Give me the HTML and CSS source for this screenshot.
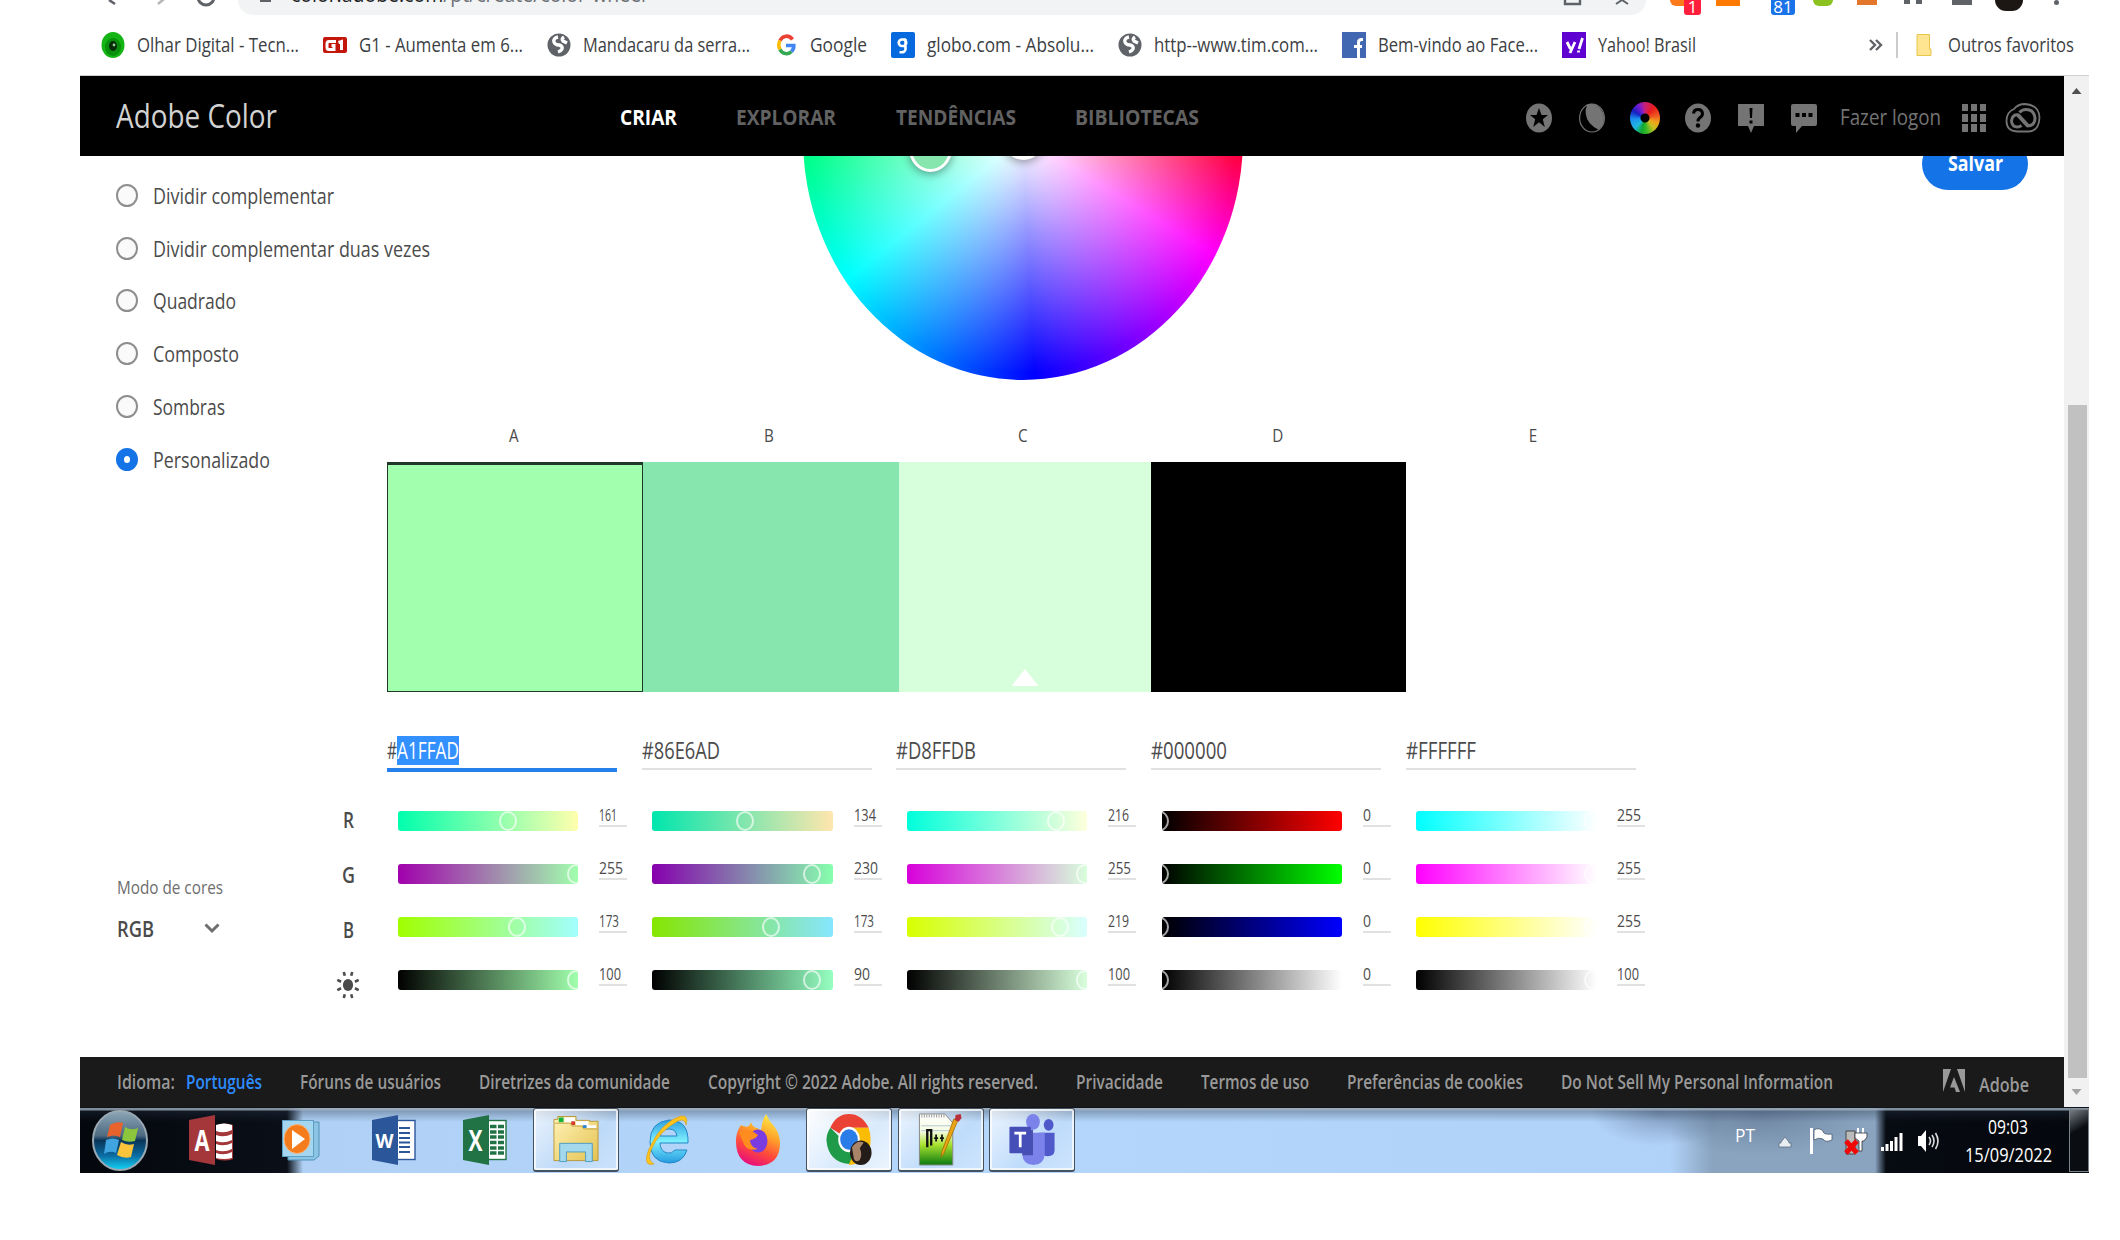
FILE: index.html
```html
<!DOCTYPE html>
<html lang="pt">
<head>
<meta charset="utf-8">
<title>Adobe Color</title>
<link rel="stylesheet" href="styles.css">
</head>
<body>
<svg class="defs" aria-hidden="true">
  <defs>
    <linearGradient id="gOrb" x2="0" y2="1"><stop offset="0" stop-color="#8ea7b8"/><stop offset=".42" stop-color="#4d6a80"/><stop offset=".5" stop-color="#0a3558"/><stop offset=".75" stop-color="#0b6aa0"/><stop offset="1" stop-color="#12d6f8"/></linearGradient>
    <linearGradient id="gFox" x1=".8" y1="0" x2=".4" y2="1"><stop offset="0" stop-color="#fff04a"/><stop offset=".4" stop-color="#ffa12a"/><stop offset=".7" stop-color="#ff4a3a"/><stop offset="1" stop-color="#e8107a"/></linearGradient>
    <linearGradient id="gIe" x2="0" y2="1"><stop offset="0" stop-color="#2f9fe0"/><stop offset=".5" stop-color="#7ff0ff"/><stop offset="1" stop-color="#249be0"/></linearGradient>
    <linearGradient id="gNpp" x2="0" y2="1"><stop offset="0" stop-color="#fff"/><stop offset=".35" stop-color="#f4fbe0"/><stop offset=".6" stop-color="#a9e22e"/><stop offset="1" stop-color="#0a7a10"/></linearGradient>
    <linearGradient id="gFold" x2="1" y2="1"><stop offset="0" stop-color="#fff3b8"/><stop offset="1" stop-color="#e4c250"/></linearGradient>
    <symbol id="globe" viewBox="0 0 24 26"><ellipse cx="12" cy="13" rx="11.5" ry="11.5" fill="#5f6368"/><path d="M11 5q-5 1-4 5 1 3 5 3 4 1 3 4-1 2-4 3M17 5q-3 2-1 4l4 2" fill="none" stroke="#fff" stroke-width="3.400"/></symbol>
  </defs>
</svg>

<div class="window">
  <div class="toolbar">
    <svg class="tb-nav" viewBox="0 0 110 6"><path d="M1 0l6 4" fill="none" stroke="#5f6368" stroke-width="2.600"/><path d="M50 4l6-5" stroke="#b5b7ba" stroke-width="2.600"/><path d="M90-3a8 8 0 0 0 16 0" fill="none" stroke="#5f6368" stroke-width="3"/></svg>
    <div class="omnibox">
      <i class="lock"></i>
      <span class="url"><span class="fit" style="--w:355px"><b>color.adobe.com</b>/pt/create/color-wheel</span></span>
      <svg class="omni-icons" viewBox="0 0 66 6"><path d="M1 0v4h15V0" fill="none" stroke="#5f6368" stroke-width="2.400"/><path d="M52 4l6-4 6 4" fill="none" stroke="#5f6368" stroke-width="2"/></svg>
    </div>
    <div class="exts">
      <span class="ext orange"><em class="red">1</em></span>
      <span class="ext box"></span>
      <span class="ext dark"><em class="blue">81</em></span>
      <span class="ext green"></span>
      <span class="ext fox"></span>
      <span class="ext puzzle"></span>
      <span class="ext list"></span>
      <span class="ext face"></span>
      <span class="ext dot"></span>
    </div>
  </div>

  <nav class="bookmarks">
    <a><svg viewBox="0 0 24 26"><ellipse cx="12" cy="13" rx="11.5" ry="13" fill="#14b414"/><ellipse cx="12" cy="15" rx="8" ry="9" fill="#08900c"/><ellipse cx="12" cy="14" rx="4" ry="5" fill="#032c05"/><circle cx="13" cy="13" r="1.4" fill="#9c9"/></svg><span class="fit" style="--w:162px">Olhar Digital - Tecn...</span></a>
    <a><svg viewBox="0 0 24 26"><rect y="5" width="24" height="16" rx="2" fill="#c4170c"/><path d="M13 9.500H6q-2 0-2 2v4q0 2 2 2h5v-4H8.500M15.500 10.500l3-1V18" fill="none" stroke="#fff" stroke-width="3"/></svg><span class="fit" style="--w:164px">G1 - Aumenta em 6...</span></a>
    <a><svg><use href="#globe"/></svg><span class="fit" style="--w:167px">Mandacaru da serra...</span></a>
    <a><svg viewBox="0 0 24 26"><g fill="none" stroke-width="3.600"><path d="M18.500 7.500A7.500 8.500 0 0 0 6 8.500" stroke="#ea4335"/><path d="M6 8.500a8.500 9 0 0 0 0 9" stroke="#fbbc05"/><path d="M6 17.500a7.500 8.500 0 0 0 11.500 2" stroke="#34a853"/><path d="M17.500 19.500q2.500-2.500 2.300-6H12" stroke="#4285f4"/></g></svg><span class="fit" style="--w:57px">Google</span></a>
    <a><svg viewBox="0 0 24 26"><rect width="24" height="26" rx="2" fill="#0669de"/><path d="M15 7.500h-4a3 3 0 0 0 0 6.500h1a3 3 0 0 0 0-6.500M14.500 7v10q0 4-6 3" fill="none" stroke="#fff" stroke-width="2.600"/></svg><span class="fit" style="--w:167px">globo.com - Absolu...</span></a>
    <a><svg><use href="#globe"/></svg><span class="fit" style="--w:164px">http--www.tim.com...</span></a>
    <a><svg viewBox="0 0 24 26"><rect width="24" height="26" fill="#4267b2"/><path d="M16.500 26V14M21 7.500h-1.500q-3 0-3 3V14M12 14.500h8" fill="none" stroke="#fff" stroke-width="3"/></svg><span class="fit" style="--w:160px">Bem-vindo ao Face...</span></a>
    <a><svg viewBox="0 0 24 26"><rect width="24" height="26" fill="#5f01d1"/><path d="M5 10l3.500 7M13 10L8 21M17 17l3.500-11M16.500 18.500v2" fill="none" stroke="#fff" stroke-width="2.800"/></svg><span class="fit" style="--w:98px">Yahoo! Brasil</span></a>
    <span class="more"><svg viewBox="0 0 14 12"><path d="M1 1l5 5-5 5M7 1l5 5-5 5" fill="none" stroke="#5f6368" stroke-width="2.400"/></svg></span>
    <a class="others"><svg viewBox="0 0 24 26"><path d="M5 2.500h12.500V17h1.500v6.500H5z" fill="#ffe591" stroke="#e8c64c"/></svg><span class="fit" style="--w:126px">Outros favoritos</span></a>
  </nav>

  <div class="view">
    <div class="page">
      <header class="top">
        <span class="brand"><span class="fit" style="--w:161px">Adobe Color</span></span>
        <nav class="menu">
          <a class="on"><span class="fit" style="--w:57px">CRIAR</span></a>
          <a><span class="fit" style="--w:100px">EXPLORAR</span></a>
          <a><span class="fit" style="--w:120px">TENDÊNCIAS</span></a>
          <a><span class="fit" style="--w:124px">BIBLIOTECAS</span></a>
        </nav>
        <div class="tools">
          <svg viewBox="0 0 26 30"><ellipse cx="13" cy="15" rx="13" ry="14.500" fill="#747474"/><path d="M13 5l2.500 7H22l-5.200 4.300L18.800 24 13 19.300 7.200 24l2-7.700L4 12h6.500z" fill="#000"/></svg>
          <svg viewBox="0 0 26 30"><ellipse cx="13" cy="15" rx="12.400" ry="14" fill="#000" stroke="#747474" stroke-width="1.200"/><path d="M6 2.500Q14-2 21 5q7 9 2 18l-3 4Q8 21 7 12 6 6 8 3z" fill="#747474"/></svg>
          <span class="mini-wheel"></span>
          <svg viewBox="0 0 26 30"><ellipse cx="13" cy="15" rx="13" ry="14.500" fill="#747474"/><path d="M8.500 10.500q.5-4 4.500-4t4.500 4q0 2.500-2.500 4-2 1.500-2 4" fill="none" stroke="#000" stroke-width="3"/><circle cx="13" cy="22.500" r="2.200"/></svg>
          <svg viewBox="0 0 26 30"><path d="M0 1h26v22H16l-3 7-3-7H0z" fill="#747474"/><path d="M11.500 5h3l-.5 10h-2zM11.500 17.500h3v3h-3z"/></svg>
          <svg viewBox="0 0 26 30"><path d="M2 1h22q2 0 2 2v18q0 2-2 2H11l-6 7v-7H2q-2 0-2-2V3q0-2 2-2z" fill="#747474"/><path d="M4.500 10h4v4h-4zM11 10h4v4h-4zM17.500 10h4v4h-4z"/></svg>
          <span class="login"><span class="fit" style="--w:101px">Fazer logon</span></span>
          <svg class="grid9" viewBox="0 0 24 28"><path d="M0 0h6v7H0zM9 0h6v7H9zM18 0h6v7h-6zM0 10h6v8H0zM9 10h6v8H9zM18 10h6v8h-6zM0 20h6v8H0zM9 20h6v8H9zM18 20h6v8h-6z" fill="#747474"/></svg>
          <svg class="cc" viewBox="0 0 36 30"><g fill="none" stroke="#747474"><path d="M12 28.500Q1.500 28 1.500 18 1.500 9 9 6q4-5 11-5 14 1 14.500 13.500Q34 28 24 28.500z" stroke-width="1.800"/><path d="M22 23q8 0 8-8-1-8.500-9-8.500-4 0-6.500 3M14 12q-7-1-7.500 6 .5 6 6 6 2 0 4-1.500" stroke-width="3"/><path d="M13 12l10 11" stroke-width="4"/></g></svg>
        </div>
      </header>

      <main class="main">
        <aside class="side">
          <ul class="rules">
            <li><i></i><span class="fit" style="--w:181px">Dividir complementar</span></li>
            <li><i></i><span class="fit" style="--w:277px">Dividir complementar duas vezes</span></li>
            <li><i></i><span class="fit" style="--w:83px">Quadrado</span></li>
            <li><i></i><span class="fit" style="--w:86px">Composto</span></li>
            <li><i></i><span class="fit" style="--w:72px">Sombras</span></li>
            <li class="sel"><i></i><span class="fit" style="--w:117px">Personalizado</span></li>
          </ul>
          <div class="mode">
            <div class="mode-label"><span class="fit" style="--w:106px">Modo de cores</span></div>
            <div class="mode-value"><span class="fit" style="--w:37px">RGB</span><svg viewBox="0 0 16 10"><path d="M1.500 1.500L8 8l6.500-6.500" fill="none" stroke="#6e6e6e" stroke-width="3"/></svg></div>
          </div>
        </aside>

        <section class="work">
          <div class="wheel-box">
            <div class="wheel"></div>
            <span class="pin pin-b"></span>
            <span class="pin pin-c"></span>
          </div>
          <div class="cols letters"><span>A</span><span>B</span><span>C</span><span>D</span><span>E</span></div>
          <div class="swatches">
            <div class="sw sw-a"></div><div class="sw sw-b"></div><div class="sw sw-c"><i></i></div><div class="sw sw-d"></div><div class="sw sw-e"></div>
          </div>
          <div class="cols hexes">
            <div class="hex active"><span class="fit" style="--w:10px">#</span><mark><span class="fit" style="--w:62px">A1FFAD</span></mark></div>
            <div class="hex"><span class="fit" style="--w:78px">#86E6AD</span></div>
            <div class="hex"><span class="fit" style="--w:80px">#D8FFDB</span></div>
            <div class="hex"><span class="fit" style="--w:76px">#000000</span></div>
            <div class="hex"><span class="fit" style="--w:70px">#FFFFFF</span></div>
          </div>
          <div class="mixer">
            <div class="channels">
              <span><b class="fit" style="--w:11px">R</b></span><span><b class="fit" style="--w:13px">G</b></span><span><b class="fit" style="--w:11px">B</b></span>
              <span><svg viewBox="0 0 24 28"><ellipse cx="12" cy="14" rx="5.500" ry="6.500" fill="#4b4b4b"/><path d="M8.500 4L7.500 0M15.500 4L16.500 0M8.500 24L7.500 28M15.500 24l1 4M4.500 10.500L.5 8.500M19.500 10.500l4-2M4.500 17.500l-4 2M19.500 17.500l4 2" stroke="#4b4b4b" stroke-width="2.800"/></svg></span>
            </div>
            <div class="sliders">
              <div class="s" style="--g:#00ffad,#ffffad"><div class="bar"><i style="left:110px"></i></div><div class="val"><span class="fit" style="--w:18px">161</span></div></div>
              <div class="s" style="--g:#00e6ad,#ffe6ad"><div class="bar"><i style="left:93px"></i></div><div class="val"><span class="fit" style="--w:22px">134</span></div></div>
              <div class="s" style="--g:#00ffdb,#ffffdb"><div class="bar"><i style="left:149px"></i></div><div class="val"><span class="fit" style="--w:21px">216</span></div></div>
              <div class="s" style="--g:#000,#f00"><div class="bar"><i style="left:-2px"></i></div><div class="val"><span class="fit" style="--w:8px">0</span></div></div>
              <div class="s" style="--g:#0ff,#fff"><div class="bar"><i style="left:177px"></i></div><div class="val"><span class="fit" style="--w:24px">255</span></div></div>

              <div class="s" style="--g:#a100ad,#a1ffad"><div class="bar"><i style="left:178px"></i></div><div class="val"><span class="fit" style="--w:24px">255</span></div></div>
              <div class="s" style="--g:#8600ad,#86ffad"><div class="bar"><i style="left:160px"></i></div><div class="val"><span class="fit" style="--w:24px">230</span></div></div>
              <div class="s" style="--g:#d800db,#d8ffdb"><div class="bar"><i style="left:178px"></i></div><div class="val"><span class="fit" style="--w:23px">255</span></div></div>
              <div class="s" style="--g:#000,#0f0"><div class="bar"><i style="left:-2px"></i></div><div class="val"><span class="fit" style="--w:8px">0</span></div></div>
              <div class="s" style="--g:#f0f,#fff"><div class="bar"><i style="left:177px"></i></div><div class="val"><span class="fit" style="--w:24px">255</span></div></div>

              <div class="s" style="--g:#a1ff00,#a1ffff"><div class="bar"><i style="left:119px"></i></div><div class="val"><span class="fit" style="--w:20px">173</span></div></div>
              <div class="s" style="--g:#86e600,#86e6ff"><div class="bar"><i style="left:119px"></i></div><div class="val"><span class="fit" style="--w:20px">173</span></div></div>
              <div class="s" style="--g:#d8ff00,#d8ffff"><div class="bar"><i style="left:153px"></i></div><div class="val"><span class="fit" style="--w:21px">219</span></div></div>
              <div class="s" style="--g:#000,#00f"><div class="bar"><i style="left:-2px"></i></div><div class="val"><span class="fit" style="--w:8px">0</span></div></div>
              <div class="s" style="--g:#ff0,#fff"><div class="bar"><i style="left:177px"></i></div><div class="val"><span class="fit" style="--w:24px">255</span></div></div>

              <div class="s" style="--g:#000,#a1ffad"><div class="bar"><i style="left:178px"></i></div><div class="val"><span class="fit" style="--w:22px">100</span></div></div>
              <div class="s" style="--g:#000,#95ffc0"><div class="bar"><i style="left:160px"></i></div><div class="val"><span class="fit" style="--w:16px">90</span></div></div>
              <div class="s" style="--g:#000,#d8ffdb"><div class="bar"><i style="left:178px"></i></div><div class="val"><span class="fit" style="--w:22px">100</span></div></div>
              <div class="s" style="--g:#000,#fff"><div class="bar"><i style="left:-2px"></i></div><div class="val"><span class="fit" style="--w:8px">0</span></div></div>
              <div class="s" style="--g:#000,#fff"><div class="bar"><i style="left:177px"></i></div><div class="val"><span class="fit" style="--w:22px">100</span></div></div>
            </div>
          </div>
        </section>

        <div class="save"><button><span class="fit" style="--w:55px">Salvar</span></button></div>
      </main>

      <footer class="foot">
        <span class="fit" style="--w:58px">Idioma:</span><a class="lang"><span class="fit" style="--w:76px">Português</span></a>
        <span class="fit" style="--w:141px">Fóruns de usuários</span>
        <span class="fit" style="--w:191px">Diretrizes da comunidade</span>
        <span class="fit" style="--w:330px">Copyright © 2022 Adobe. All rights reserved.</span>
        <span class="fit" style="--w:87px">Privacidade</span>
        <span class="fit" style="--w:108px">Termos de uso</span>
        <span class="fit" style="--w:176px">Preferências de cookies</span>
        <span class="fit" style="--w:272px">Do Not Sell My Personal Information</span>
        <span class="adobe"><svg viewBox="0 0 22 23"><path d="M0 0h8L0 23zM14 0h8v23zM11 8l6 15h-4l-1.500-4.500H7z" fill="#999"/></svg><span class="fit" style="--w:50px">Adobe</span></span>
      </footer>
    </div>
    <div class="scroll"><i class="up"></i><i class="thumb"></i><i class="down"></i></div>
  </div>

  <div class="taskbar">
    <svg class="orb" viewBox="0 0 56 61"><ellipse cx="28" cy="30.500" rx="27" ry="29.500" fill="url(#gOrb)" stroke="#9aa8b4" stroke-width="2"/><path d="M18 15q6-4 13-2l-3 14q-6-3-13 0z" fill="#e8622c"/><path d="M33 17q6 4 13 1l-3 13q-7 2-13-1z" fill="#8cc63c"/><path d="M14 30q7-3 13 0l-3 13q-6-3-12 1z" fill="#3fa4e0"/><path d="M29 32q6 4 13 2l-3 13q-7 2-14-2z" fill="#fcc43a"/></svg>
    <svg class="ic office" viewBox="0 0 44 50"><path d="M0 5l26-5v50L0 45z" fill="#a4373a"/><path d="M27 10q9-3 17 0v34q-8 3-17 0z" fill="#a4373a"/><path d="M27 10q8-3 16 0v5q-8 4-16 1zM27 20q8 3 16-1v6q-8 4-16 1zM27 29q8 3 16-1v6q-8 4-16 1zM27 38q8 3 16-1v6q-8 2-16 0z" fill="#fff"/><text x="13" y="36" textLength="15" lengthAdjust="spacingAndGlyphs">A</text></svg>
    <svg class="ic wmp" viewBox="0 0 40 40"><path d="M6 2h31v34l-5 4H6z" fill="#8cc4e4" stroke="#4f92b8"/><rect x=".5" y=".5" width="31" height="36" fill="#a5d6f0" stroke="#5c9fc6"/><ellipse cx="15" cy="19" rx="13" ry="14.500" fill="#f57c1c" stroke="#f7b47a"/><path d="M10 10l13 9-13 10z" fill="#fff"/></svg>
    <svg class="ic office" viewBox="0 0 44 50"><rect x="24" y="5.500" width="19" height="39" fill="#fff" stroke="#2b579a" stroke-width="1.400"/><path d="M27 13h11M27 18h11M27 23h11M27 27.500h11M27 32h11M27 37h11" stroke="#2b579a" stroke-width="2"/><path d="M0 5l26-5v50L0 45z" fill="#2b579a"/><text x="12.500" y="33" class="w" textLength="18" lengthAdjust="spacingAndGlyphs">W</text></svg>
    <svg class="ic office" viewBox="0 0 44 50"><rect x="24" y="5.500" width="19" height="39" fill="#fff" stroke="#217346" stroke-width="1.400"/><path d="M27 11.500h14M27 17h14M27 22h14M27 27.500h14M27 33h14M27 38h14" stroke="#217346" stroke-width="3.400" stroke-dasharray="6.500 1.500"/><path d="M0 5l26-5v50L0 45z" fill="#217346"/><text x="12.500" y="36" textLength="14" lengthAdjust="spacingAndGlyphs">X</text></svg>
    <span class="tbtn"><svg viewBox="0 0 48 48"><path d="M1 46V3h4V0h19v4h14v1h9v41z" fill="url(#gFold)" stroke="#b8983c"/><path d="M6 1h5v5H6z" fill="#14b43c"/><path d="M12 1h11v5H12zM24 5h13v4H24zM34 9h11v3H34z" fill="#fff"/><path d="M19 5h4v4h-4z" fill="#d43c2c"/><path d="M31 9h4v3h-4z" fill="#2c84d4"/><path d="M2 7h16l2 3h10l2 3h14" fill="none" stroke="#c4a44a"/><path d="M7 47V28h34v19h-7V37H14v10z" fill="#a4d8ec" stroke="#4c9cc0"/></svg></span>
    <svg class="ic ie" viewBox="0 0 46 52"><path d="M15 29h28Q44 6 24 6 5 8 5 28t19 21q14 0 18-13H30q-3 4-8 3-7-2-7-10zm0-7q2-7 9-7t8 7z" fill="url(#gIe)" stroke="#2386c8"/><path d="M9 50Q-3 53 4 35 16 8 36 2q8-1 5 9-1-7-8-4Q14 17 6 36q-4 11 3 14z" fill="#fcc41c" stroke="#d89a10" stroke-width=".6"/></svg>
    <svg class="ic ff" viewBox="0 0 44 52"><path d="M5 11q5 3 8 1l2-4q1 5 6 6l4 2q1-10 5-16 3 7 8 12 6 8 6 17 0 22-22 23Q0 51 0 27 0 18 5 11z" fill="url(#gFox)"/><ellipse cx="22" cy="27" rx="9.500" ry="11.500" fill="#7a3ce0"/><path d="M3 18q5-4 13-1l6 4q-2 4-8 5 0 7 8 9-12 3-15-7z" fill="#ff8c1e"/></svg>
    <span class="tbtn hot"><svg viewBox="0 0 46 52"><path d="M23 26L4 14Q10 0 23 0t20 14H23z" fill="#ea4335"/><path d="M43 14H23v12l0 26Q45 50 45 26q0-6-2-12z" fill="#fbbc05"/><path d="M4 14Q0 20 0 27q2 22 23 24l8-18H23z" fill="#1e9a48"/><ellipse cx="23" cy="26" rx="11" ry="13" fill="#fff"/><ellipse cx="23" cy="26" rx="9" ry="10.500" fill="#2a7de9"/><ellipse cx="35" cy="39.500" rx="11" ry="12.500" fill="#241c18"/><path d="M26 34q5-8 12-5l-4 6q3 6 0 12-4 3-6-1z" fill="#a88468"/></svg></span>
    <span class="tbtn"><svg viewBox="0 0 46 52"><path d="M1 0h26l8 9v43H1z" fill="url(#gNpp)" stroke="#888"/><path d="M3 2h24" stroke="#999" stroke-width="3" stroke-dasharray="1 1.500"/><path d="M3 12h30M3 17h30" stroke="#b4c8d4"/><path d="M9 34V16.500h4V32" fill="none" stroke="#111" stroke-width="2.400"/><path d="M16 24.500h4M18 21v7M22 24.500h4M24 21v7" fill="none" stroke="#111" stroke-width="1.800"/><path d="M36 5l4 2-14 33-3 4 1-6z" fill="#e8a414" stroke="#a46c08" stroke-width=".8"/><path d="M38 1l5-1 1 4-3 4-4-2z" fill="#b8303c"/></svg></span>
    <span class="tbtn"><svg viewBox="0 0 46 52"><ellipse cx="24" cy="8" rx="7" ry="8" fill="#7b83eb"/><ellipse cx="40" cy="11" rx="5" ry="6" fill="#5059c9"/><path d="M30 19h16v18q0 6-7 6t-9-6z" fill="#5059c9"/><path d="M13 19h23v22q-1 11-11.500 11T13 41z" fill="#7b83eb"/><path d="M13 42h11V16h-6" fill="#4a50b0"/><rect y="13" width="22" height="27" rx="1" fill="#464eb8"/><path d="M5 19.500h12M11 18v16" stroke="#fff" stroke-width="2.800"/></svg></span>

    <div class="tray">
      <span class="pt"><span class="fit" style="--w:20px">PT</span></span>
      <svg class="t-up" viewBox="0 0 12 10"><path d="M6 0l4 5v1h2v4H0V6h2V5z" fill="#e8edf2" stroke="#5c6c80" stroke-width=".8"/></svg>
      <svg class="t-flag" viewBox="0 0 24 26"><path d="M1.500 0v26" stroke="#fff" stroke-width="3"/><path d="M4 2q5-3 9 1 0 4 9 3v6q-7 3-9-1-4-2-9 1z" fill="#fff" stroke="#4a5a6c" stroke-width=".8"/></svg>
      <svg class="t-bat" viewBox="0 0 22 26"><path d="M1 3h9v23H1z" fill="#bbb" stroke="#444"/><path d="M13 0v5M18 0v5" stroke="#fff" stroke-width="2"/><path d="M10 5h12v4l-3 4h-2v10h-3V13l-4-3z" fill="#fff" stroke="#333" stroke-width=".8"/><path d="M1 13l11 12M12 13L1 25" stroke="#f00808" stroke-width="5"/></svg>
      <svg class="t-sig" viewBox="0 0 22 18"><path d="M1.500 18v-4M6 18v-7M10.500 18V8M15 18V4M20 18V0" stroke="#fff" stroke-width="3"/></svg>
      <svg class="t-vol" viewBox="0 0 22 24"><path d="M0 7h3l5-6v22l-5-6H0z" fill="#fff"/><path d="M11 8q3 4 0 8M14 6q4 6 0 12M17.500 4q5 8 0 16" fill="none" stroke="#ddd" stroke-width="1.600"/></svg>
      <div class="clock"><span class="fit" style="--w:40px">09:03</span><span class="fit" style="--w:87px">15/09/2022</span></div>
      <i class="peek"></i>
    </div>
  </div>
</div>
<script src="fit.js"></script>
</body>
</html>
```
FILE: styles.css
```css
* { box-sizing: border-box; }
body {
  margin: 0;
  background: #fff;
  font-family: "Open Sans", "Noto Sans", sans-serif;
  color: #4b4b4b;
  height: 1240px;
  overflow: hidden;
}
.defs { position: absolute; width: 0; height: 0; }
svg { display: block; flex: none; overflow: visible; }
i, em { font-style: normal; }

/* Condensed text: each label is narrowed to its --w width by fit.js */
.fit {
  display: inline-block;
  flex: none;
  width: var(--w);
  white-space: nowrap;
  transform-origin: 0 50%;
  vertical-align: top;
}

.window { width: 2009px; margin-left: 80px; height: 1173px; display: flex; flex-direction: column; }

/* browser toolbar */
.toolbar { height: 15px; display: flex; overflow: hidden; flex: none; }
.tb-nav { width: 110px; height: 6px; margin: 0 20px 0 28px; }
.omnibox { width: 1408px; height: 15px; background: #f1f3f4; border-radius: 0 0 20px 20px; display: flex; overflow: hidden; }
.lock { width: 11px; height: 2px; background: #5f6368; margin: 0 20px 0 22px; }
.url { font-size: 21px; line-height: 24px; margin-top: -18px; color: #6b6f74; height: 24px; }
.url b { font-weight: 400; color: #202124; }
.omni-icons { width: 66px; height: 6px; margin-left: auto; margin-right: 16px; }
.exts { display: flex; margin-left: 24px; }
.ext { height: 8px; width: 24px; margin-right: 23px; flex: none; }
.orange { width: 14px; background: #ff7a1a; border-radius: 0 0 0 8px; height: 6px; margin-right: 32px; }
.ext em { display: block; height: 15px; margin-left: 14px; color: #fff; font-size: 17px; line-height: 13px; text-align: center; border-radius: 0 0 3px 3px; }
.red { width: 17px; background: #ff1f3d; }
.blue { width: 24px; background: #1a73e8; }
.ext.dark { width: 14px; margin-right: 32px; background: none; }
.ext.dark em { margin-left: 7px; }
.box { background: #ff7a00; height: 6px; margin-right: 24px; }
.green { background: #8cc220; border-radius: 0 0 12px 12px; height: 6px; width: 20px; margin-left: 3px; margin-right: 24px; }
.fox { background: #e2762a; height: 5px; width: 20px; margin-right: 27px; }
.puzzle { height: 4px; width: 18px; margin-right: 30px; border: solid #5f6368; border-width: 0 6px; }
.list { height: 5px; width: 20px; margin-right: 23px; background: #5f6368; }
.face { height: 11px; width: 28px; margin-right: 31px; background: #1d1714; border-radius: 0 0 14px 14px; }
.dot { width: 5px; height: 5px; background: #5f6368; border-radius: 3px; margin: 0; }

/* bookmarks */
.bookmarks { height: 61px; flex: none; display: flex; align-items: center; gap: 24px; padding: 0 15px 0 21px; border-bottom: 1px solid #cdd2ce; font-size: 20px; line-height: 26px; color: #3c4043; }
.bookmarks a { display: flex; align-items: center; gap: 12px; }
.bookmarks a svg { width: 24px; height: 26px; }
.bookmarks .more { margin-left: auto; margin-right: -10px; padding-right: 13px; border-right: 2px solid #ccc; height: 26px; display: flex; align-items: center; }
.bookmarks .more svg { width: 14px; height: 12px; }

.view { display: flex; height: 1031px; flex: none; }
.page { width: 1984px; display: flex; flex-direction: column; }

/* site header */
.top { height: 80px; flex: none; background: #000; display: flex; align-items: center; padding-left: 36px; position: relative; z-index: 2; }
.brand { color: #d2d2d2; font-size: 32px; font-weight: 400; width: 504px; line-height: 44px; margin-top: -1px; }
.menu { display: flex; gap: 59.400px; color: #626262; font-size: 21px; font-weight: 700; line-height: 30px; width: 906px; margin-top: 2px; }
.menu .on { color: #fff; }
.tools { display: flex; align-items: center; color: #747474; margin-top: 4px; }
.tools > svg { width: 26px; height: 30px; margin-right: 27.300px; }
.mini-wheel { width: 30px; height: 32px; border-radius: 50%; margin: 0 25px 0 -3px; background: radial-gradient(circle, #000 0 4px, transparent 5px), conic-gradient(#c8207a, #e81c1c 40deg, #f05a20 80deg, #f0a41c 110deg, #c8c020 140deg, #30b828 175deg, #10a830 195deg, #20b8e0 225deg, #1c90f0 265deg, #1420c0 300deg, #7a1cd0 335deg, #c8207a); }
.login { font-size: 21px; line-height: 30px; margin: -2px 21px 0 -4px; }
.tools .grid9 { width: 24px; height: 28px; margin-right: 19px; }
.tools .cc { width: 36px; margin-right: 0; }

/* main */
.main { height: 901px; flex: none; display: flex; overflow: hidden; }
.side { width: 256px; padding-left: 36px; flex: none; display: flex; flex-direction: column; }
.rules { list-style: none; margin: 13px 0 0; padding: 0; font-size: 21.500px; }
.rules li { height: 52.800px; display: flex; align-items: center; gap: 15px; }
.rules i { width: 22px; height: 23px; border-radius: 50%; border: 2.500px solid #8e8e8e; background: #fafafa; flex: none; }
.rules .sel i { border: 8px solid #1473e6; background: #fff; }
.mode { margin-top: 382px; padding-left: 1px; }
.mode-label { font-size: 18.500px; line-height: 26px; color: #6e6e6e; margin-top: 6px; }
.mode-value { margin-top: 12px; font-size: 22px; line-height: 32px; font-weight: 600; display: flex; align-items: center; }
.mode-value svg { width: 16px; height: 10px; margin-left: 50px; }

.work { width: 1325px; flex: none; }
.wheel-box { height: 260px; position: relative; }
.wheel {
  position: absolute; left: 467px; top: -238.500px; width: 440px; height: 440px; border-radius: 50%;
  transform: scaleY(1.1);
  background: radial-gradient(circle closest-side, #fff 0, rgba(255,255,255,.57) 40%, rgba(255,255,255,0) 97%),
    conic-gradient(#ff8c00, #ff0000 86deg, #ff00ff 119deg, #0000ff 177deg, #00ffff 234deg, #00ff66 275deg, #00ff00 300deg, #ffff00 340deg, #ff8c00);
}
.pin { position: absolute; width: 43px; height: 46px; border: 3px solid #fff; border-radius: 50%; box-shadow: 0 2px 10px rgba(0,0,0,.4); }
.pin-b { left: 573px; top: -30px; background: #86e6ad; }
.pin-c { left: 666px; top: -42px; background: #fff; }

.cols { display: grid; grid-template-columns: repeat(5, 254.700px); padding-left: 51px; }
.letters { height: 46px; font-size: 18.500px; line-height: 37px; text-align: center; }
.letters span { transform: scaleX(.82); margin-right: 1px; }
.swatches { display: flex; height: 230px; padding-left: 51px; }
.sw { width: 255px; }
.sw-a { width: 256px; background: #a1ffad; border: 1px solid #20382a; border-top-width: 3px; }
.sw-b { width: 256px; background: #86e6ad; }
.sw-c { width: 252px; background: #d8ffdb; display: flex; justify-content: center; align-items: flex-end; }
.sw-c i { width: 27px; height: 17px; background: #fff; clip-path: polygon(50% 0, 100% 100%, 0 100%); margin-bottom: 6px; }
.sw-d { background: #000; }
.sw-e { background: #fff; }

.hexes { margin-top: 44px; height: 58.500px; align-items: start; }
.hex { width: 230px; height: 34px; border-bottom: 2px solid #e1e1e1; font-size: 23px; line-height: 29px; display: flex; }
.hex.active { height: 36px; border-bottom: 4px solid #2680eb; }
.hex mark { background: #3390ff; color: #fff; height: 29px; display: block; }

.mixer { display: flex; }
.channels { width: 51px; height: 220px; display: flex; flex-direction: column; font-size: 22px; margin-top: -3px; }
.channels span { height: 54.900px; width: 24px; display: flex; justify-content: center; align-items: center; }
.channels b { font-weight: 600; }
.channels svg { width: 24px; height: 26px; margin-top: 3px; }
.sliders { display: grid; grid-template-columns: repeat(5, 254.600px); grid-auto-rows: 52.900px; }
.s { display: flex; align-items: center; padding-left: 10.800px; }
.bar { width: 180.500px; height: 20px; border-radius: 3px; background: linear-gradient(90deg, var(--g)); position: relative; overflow: hidden; flex: none; }
.bar i { position: absolute; top: 0; width: 18px; height: 20px; margin-left: -9px; border: 2px solid rgba(255,255,255,.65); border-radius: 50%; }
.val { margin-left: 20.700px; width: 28px; height: 23px; line-height: 21px; font-size: 16.500px; font-weight: 500; border-bottom: 2px solid #e1e1e1; margin-bottom: 10px; display: flex; }

.save { flex: 1; display: flex; justify-content: flex-end; padding-right: 36px; margin-top: -18px; }
.save button { width: 106px; height: 52px; border: 0; border-radius: 26px; background: #1473e6; color: #fff; font: 700 21px/30px "Open Sans", sans-serif; display: flex; justify-content: center; align-items: center; padding: 0 0 2px; }

/* site footer */
.foot { height: 50px; flex: none; background: #1a1a1a; color: #999; display: flex; align-items: center; gap: 38px; padding-left: 37px; font-size: 19px; font-weight: 600; line-height: 28px; }
.foot .lang { color: #2d8cff; margin-left: -27px; }
.adobe { display: flex; align-items: center; gap: 14px; margin-left: 72px; }
.adobe .fit { margin-top: 5px; }
.adobe svg { width: 22px; height: 23px; margin-top: -4px; }

/* scrollbar */
.scroll { width: 25px; background: #f1f1f1; display: flex; flex-direction: column; align-items: center; }
.scroll .up { width: 10px; height: 6px; background: #505050; clip-path: polygon(50% 0, 100% 100%, 0 100%); margin-top: 12px; }
.scroll .thumb { width: 19px; height: 673px; background: #c1c1c1; margin-top: 311px; margin-left: 1px; }
.scroll .down { width: 10px; height: 6px; background: #a3a3a3; clip-path: polygon(0 0, 100% 0, 50% 100%); margin-top: 11px; }

/* taskbar */
.taskbar {
  height: 66px; flex: none; display: flex; align-items: center; padding-left: 12px;
  background:
    linear-gradient(#101418 0 1px, rgba(150,165,180,.85) 1px 3px, rgba(40,55,75,.35) 4px, transparent 15px),
    radial-gradient(ellipse 70px 34px at 1580px 5px, rgba(70,90,120,.45), transparent),
    radial-gradient(ellipse 110px 40px at 1680px 8px, rgba(70,90,120,.4), transparent),
    linear-gradient(90deg, #04070c 0, #0a0f18 207px, #b0d1f5 223px, #b4d6fb 900px, #b1d2f8 1590px, #8aa4c0 1632px, #8aa4c0 1795px, #070b12 1806px, #04070c);
}
.orb { width: 56px; height: 61px; }
.ic { width: 44px; height: 50px; }
.ic text { font: 700 28px "Open Sans", sans-serif; fill: #fff; text-anchor: middle; }
.ic text.w { font-size: 20px; }
.orb + .office { margin-left: 41px; }
.ic.wmp { width: 40px; height: 40px; margin: 0 50px 0 49px; }
.wmp + .office { margin-right: 47px; }
.tbtn { width: 86px; height: 64px; margin-left: 5.500px; border: 1.500px solid #47525f; border-bottom-width: 2px; border-radius: 3px; box-shadow: inset 0 0 0 2px rgba(255,255,255,.7); background: linear-gradient(135deg, rgba(255,255,255,.75), rgba(255,255,255,.15) 60%, rgba(255,255,255,.35)); display: flex; align-items: center; justify-content: center; }
.tbtn svg { width: 46px; height: 51px; }
.tbtn.hot { background: linear-gradient(135deg, #fff, rgba(255,255,255,.5) 60%, rgba(255,255,255,.75)); margin-left: 26px; }
.office + .tbtn { margin-left: 26px; }
.ic.ie { width: 46px; height: 52px; margin: 0 45px 0 26px; }
.ic.ff { height: 52px; }
.tray { margin-left: auto; display: flex; align-items: center; color: #fff; height: 66px; }
.pt { font-size: 19px; line-height: 26px; margin: -10px 24px 0 0; }
.t-up { width: 12px; height: 10px; margin: 4px 19px 0 0; }
.t-flag { width: 24px; height: 26px; margin: 2px 11px 0 0; }
.t-bat { width: 22px; height: 26px; margin: 2px 14px 0 0; }
.t-sig { width: 22px; height: 18px; margin: 4px 15px 0 0; }
.t-vol { width: 22px; height: 24px; margin: 2px 24px 0 0; }
.clock { width: 88px; font-size: 19.500px; line-height: 28px; display: flex; flex-direction: column; align-items: center; margin: 2px 17px 0 0; }
.peek { width: 20px; height: 63px; border: 1.500px solid #7c828a; background: linear-gradient(150deg, #777d84, #0a0e12 35%); }
```
FILE: fit.js
```js
// Narrow every .fit label so that its text spans exactly the width in --w.
function fitLabels() {
  document.querySelectorAll('.fit').forEach(function (el) {
    el.style.transform = 'none';
    var range = document.createRange();
    range.selectNodeContents(el);
    var natural = range.getBoundingClientRect().width;
    var target = parseFloat(el.style.getPropertyValue('--w'));
    if (natural > 0) {
      el.style.transform = 'scaleX(' + target / natural + ')';
    }
  });
}
fitLabels();
document.fonts.ready.then(fitLabels);
```
